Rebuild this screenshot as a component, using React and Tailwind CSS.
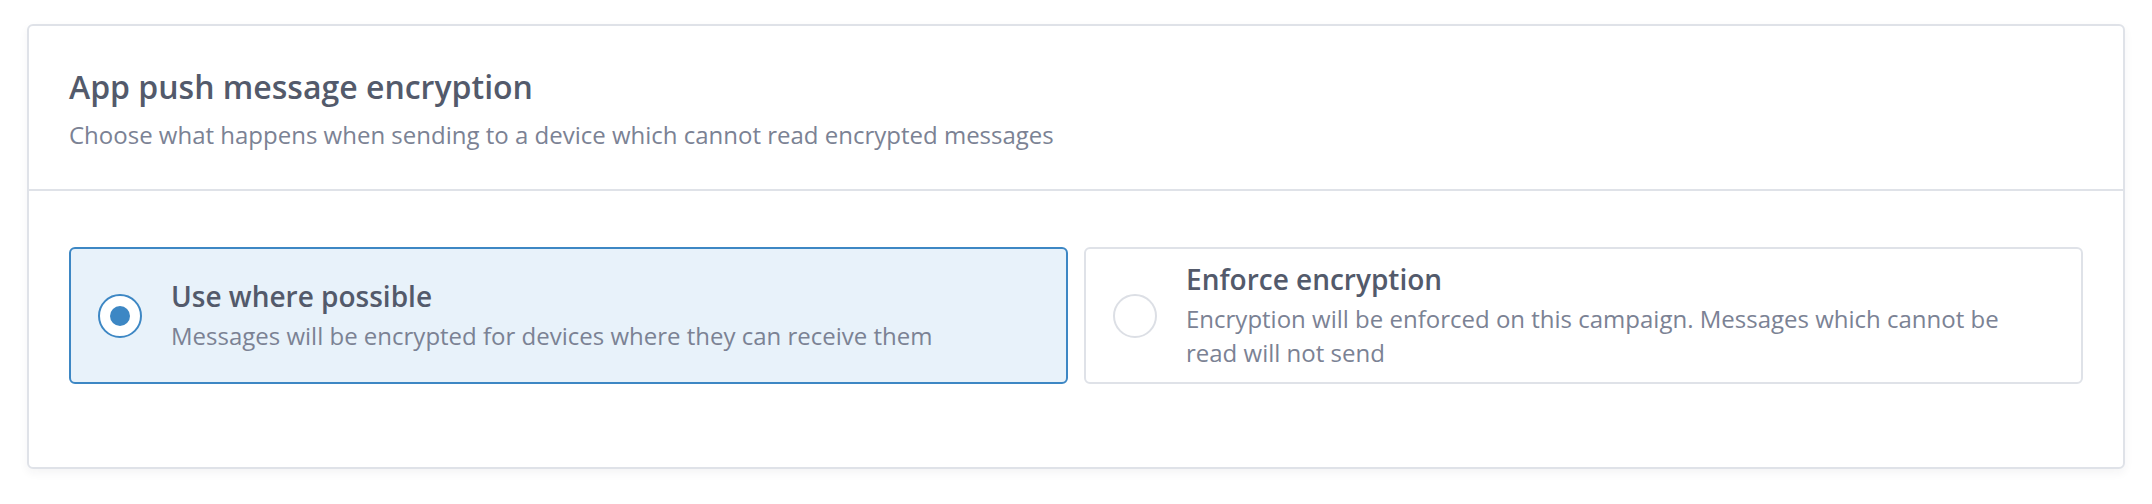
import { useState } from 'react';

const options = [
  {
    id: 'possible',
    title: 'Use where possible',
    desc: 'Messages will be encrypted for devices where they can receive them',
  },
  {
    id: 'enforce',
    title: 'Enforce encryption',
    desc: 'Encryption will be enforced on this campaign. Messages which cannot be read will not send',
  },
];

export default function App() {
  const [selected, setSelected] = useState('possible');

  return (
    <div
      className="min-h-screen bg-white px-[27px] pt-[24px]"
      style={{ fontFamily: '"Open Sans", "Noto Sans", sans-serif' }}
    >
      <div className="rounded-[6px] border-2 border-[#dfe2e8] bg-white shadow-[0_4px_10px_rgba(30,40,60,0.05)]">
        <div className="px-[40px] pt-[40px] pb-[36px] border-b-2 border-[#dfe2e8]">
          <h1 className="text-[32px] leading-[42px] font-semibold text-[#535a6b]">
            App push message encryption
          </h1>
          <p className="mt-[9px] text-[24px] leading-[36px] text-[#7b8294]">
            Choose what happens when sending to a device which cannot read encrypted messages
          </p>
        </div>

        <div className="px-[40px] pt-[56px] pb-[83px]">
          <div className="grid grid-cols-2 gap-[16px]">
            {options.map((o) => {
              const active = selected === o.id;
              return (
                <button
                  key={o.id}
                  onClick={() => setSelected(o.id)}
                  className={
                    'flex items-center text-left rounded-[6px] border-2 min-h-[137px] py-[12px] pl-[27px] pr-[40px] ' +
                    (active ? 'border-[#3d87c4] bg-[#e8f2fa]' : 'border-[#dfe2e8] bg-white')
                  }
                >
                  <span
                    className={
                      'flex-none w-[44px] h-[44px] rounded-full border-2 flex items-center justify-center bg-white ' +
                      (active ? 'border-[#3d87c4]' : 'border-[#dcdfe5]')
                    }
                  >
                    {active && <span className="w-[20px] h-[20px] rounded-full bg-[#3d87c4]" />}
                  </span>
                  <span className="ml-[29px] flex flex-col">
                    <span className="text-[28px] leading-[36px] font-semibold text-[#535a6b]">{o.title}</span>
                    <span className="mt-[5px] text-[24px] leading-[34px] text-[#7b8294]">{o.desc}</span>
                  </span>
                </button>
              );
            })}
          </div>
        </div>
      </div>
    </div>
  );
}
